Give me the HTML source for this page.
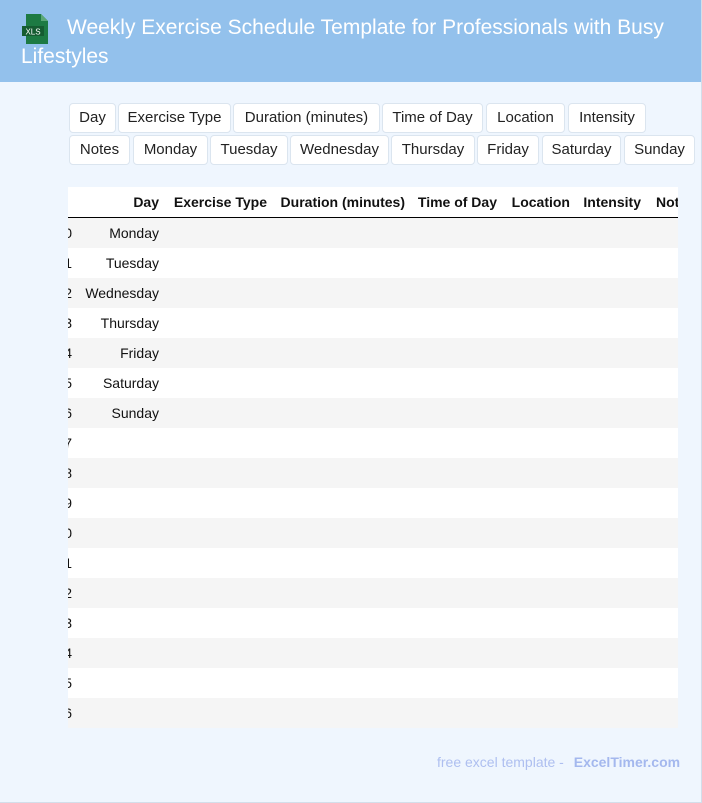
<!DOCTYPE html>
<html><head><meta charset="utf-8"><style>
*{margin:0;padding:0;box-sizing:border-box}
body{width:702px;height:803px;background:#eff6fe;font-family:"Liberation Sans",Arial,sans-serif;position:relative;overflow:hidden;border-right:1px solid #d3deea;border-bottom:1px solid #d3deea}
.hd{position:absolute;left:0;top:0;width:701px;height:82px;background:#93c1ec}
.t{position:absolute;left:21px;top:13px;width:670px;color:#fff;font-size:21px;line-height:29px;text-indent:46px}
.tag{position:absolute;height:30px;background:#fff;border:1px solid #dbe5ef;border-radius:4px;font-size:15px;line-height:28px;text-align:center;color:#222}
.tb{position:absolute;left:68px;top:187px;width:610px;height:541px;overflow:hidden;background:#fff}
.r{position:absolute;left:0;width:610px;height:30px;font-size:14px;line-height:30px;color:#111}
.r span{position:absolute;text-align:right;white-space:nowrap}
.g{background:#f5f5f5}
.h{font-weight:bold;top:0;height:31px;border-bottom:1px solid #000}
.ft{position:absolute;top:754px;left:437px;font-size:14px;color:#aebff0}
.ft b{color:#a4b8ee;margin-left:6px}
</style></head><body>
<div class="hd"><svg style="position:absolute;left:22px;top:14px" width="28" height="30" viewBox="0 0 28 30"><path d="M4 0h15l7 7v23H4z" fill="#1d7a43"/><path d="M19 0v7h7z" fill="#5aa776"/><rect x="0" y="12" width="22" height="10" fill="#155c31"/><text x="11" y="20.5" font-size="8" fill="#fff" text-anchor="middle" font-family="Liberation Sans">XLS</text></svg>
<div class="t">Weekly Exercise Schedule Template for Professionals with Busy Lifestyles</div></div>

<div class="tag" style="left:69px;top:103px;width:47px">Day</div>
<div class="tag" style="left:118px;top:103px;width:113px">Exercise Type</div>
<div class="tag" style="left:233px;top:103px;width:147px">Duration (minutes)</div>
<div class="tag" style="left:382px;top:103px;width:101px">Time of Day</div>
<div class="tag" style="left:486px;top:103px;width:79px">Location</div>
<div class="tag" style="left:568px;top:103px;width:78px">Intensity</div>
<div class="tag" style="left:69px;top:135px;width:61px">Notes</div>
<div class="tag" style="left:133px;top:135px;width:75px">Monday</div>
<div class="tag" style="left:210px;top:135px;width:78px">Tuesday</div>
<div class="tag" style="left:290px;top:135px;width:99px">Wednesday</div>
<div class="tag" style="left:391px;top:135px;width:84px">Thursday</div>
<div class="tag" style="left:477px;top:135px;width:62px">Friday</div>
<div class="tag" style="left:542px;top:135px;width:79px">Saturday</div>
<div class="tag" style="left:624px;top:135px;width:71px">Sunday</div>

<div class="tb">
<div class="r h"><span style="right:519px">Day</span><span style="right:411px">Exercise Type</span><span style="right:273px">Duration (minutes)</span><span style="right:181px">Time of Day</span><span style="right:108px">Location</span><span style="right:37px">Intensity</span><span style="left:588px">Notes</span></div>
<div class="r g" style="top:31px"><span style="right:606px">0</span><span style="right:519px">Monday</span></div>
<div class="r" style="top:61px"><span style="right:606px">1</span><span style="right:519px">Tuesday</span></div>
<div class="r g" style="top:91px"><span style="right:606px">2</span><span style="right:519px">Wednesday</span></div>
<div class="r" style="top:121px"><span style="right:606px">3</span><span style="right:519px">Thursday</span></div>
<div class="r g" style="top:151px"><span style="right:606px">4</span><span style="right:519px">Friday</span></div>
<div class="r" style="top:181px"><span style="right:606px">5</span><span style="right:519px">Saturday</span></div>
<div class="r g" style="top:211px"><span style="right:606px">6</span><span style="right:519px">Sunday</span></div>
<div class="r" style="top:241px"><span style="right:606px">7</span></div>
<div class="r g" style="top:271px"><span style="right:606px">8</span></div>
<div class="r" style="top:301px"><span style="right:606px">9</span></div>
<div class="r g" style="top:331px"><span style="right:606px">10</span></div>
<div class="r" style="top:361px"><span style="right:606px">11</span></div>
<div class="r g" style="top:391px"><span style="right:606px">12</span></div>
<div class="r" style="top:421px"><span style="right:606px">13</span></div>
<div class="r g" style="top:451px"><span style="right:606px">14</span></div>
<div class="r" style="top:481px"><span style="right:606px">15</span></div>
<div class="r g" style="top:511px"><span style="right:606px">16</span></div>
</div>
<div class="ft">free excel template - <b>ExcelTimer.com</b></div>
</body></html>
